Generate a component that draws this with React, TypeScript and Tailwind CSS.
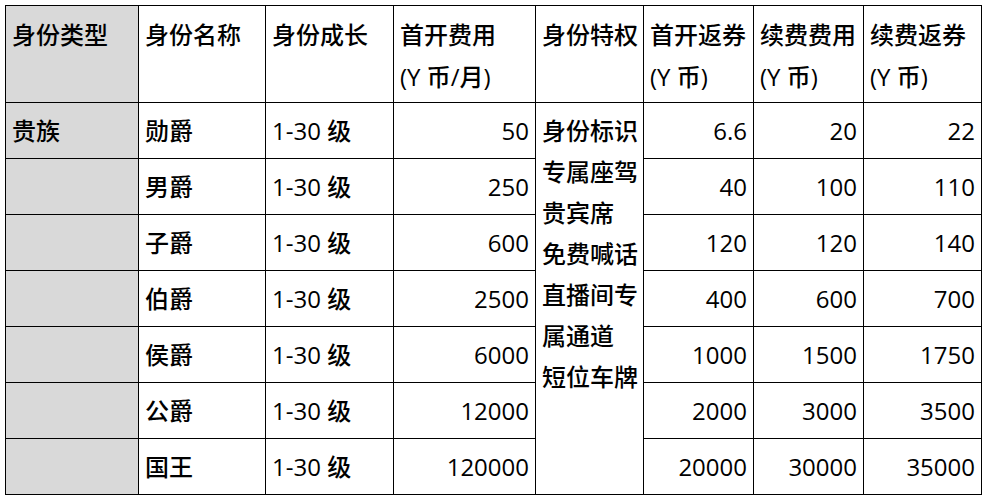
import React from 'react';

const HEAD = [
    ["身份类型"],
    ["身份名称"],
    ["身份成长"],
    ["首开费用", "(Y 币/月)"],
    ["身份特权"],
    ["首开返券", "(Y 币)"],
    ["续费费用", "(Y 币)"],
    ["续费返券", "(Y 币)"],
];

const ROWS = [
    { name: "勋爵", first: "50", back: "6.6", renew: "20", renewBack: "22" },
    { name: "男爵", first: "250", back: "40", renew: "100", renewBack: "110" },
    { name: "子爵", first: "600", back: "120", renew: "120", renewBack: "140" },
    { name: "伯爵", first: "2500", back: "400", renew: "600", renewBack: "700" },
    { name: "侯爵", first: "6000", back: "1000", renew: "1500", renewBack: "1750" },
    { name: "公爵", first: "12000", back: "2000", renew: "3000", renewBack: "3500" },
    { name: "国王", first: "120000", back: "20000", renew: "30000", renewBack: "35000" },
];

const PERKS = ["身份标识", "专属座驾", "贵宾席", "免费喊话", "直播间专属通道", "短位车牌"];

const cell = "border border-black px-[6px] align-middle whitespace-nowrap";
const num = `${cell} text-right`;

const App: React.FC = () => {
  return (
    <div className="w-[985px] h-[498px] bg-white p-[5px] text-black text-[24px] font-medium font-['Open_Sans','Noto_Sans_CJK_SC',sans-serif]">
        <table className="table-fixed border-collapse w-[976px]">
            <colgroup>
                <col className="w-[133px]" />
                <col className="w-[127px]" />
                <col className="w-[128px]" />
                <col className="w-[142px]" />
                <col className="w-[108px]" />
                <col className="w-[110px]" />
                <col className="w-[110px]" />
                <col className="w-[118px]" />
            </colgroup>
            <thead>
                <tr className="h-[97px]">
                    {HEAD.map((lines, i) => (
                        <th
                            key={i}
                            className={`border border-black px-[6px] pt-[8px] align-top text-left font-medium leading-[42px] whitespace-nowrap ${i === 0 ? 'bg-[#d9d9d9]' : ''}`}
                        >
                            {lines.map((l) => <div key={l}>{l}</div>)}
                        </th>
                    ))}
                </tr>
            </thead>
            <tbody>
                {ROWS.map((r, idx) => (
                    <tr key={r.name} className="h-[56px]">
                        <td className={`${cell} bg-[#d9d9d9]`}>{idx === 0 ? "贵族" : ""}</td>
                        <td className={cell}>{r.name}</td>
                        <td className={cell}>1-30 级</td>
                        <td className={num}>{r.first}</td>
                        {idx === 0 && (
                            <td rowSpan={7} className="border border-black pl-[6px] pr-0 pt-[7px] align-top leading-[41px]">
                                {PERKS.map((p) => (
                                    <div key={p} className="w-[97px] break-all">{p}</div>
                                ))}
                            </td>
                        )}
                        <td className={num}>{r.back}</td>
                        <td className={num}>{r.renew}</td>
                        <td className={num}>{r.renewBack}</td>
                    </tr>
                ))}
            </tbody>
        </table>
    </div>
  );
};

export default App;
